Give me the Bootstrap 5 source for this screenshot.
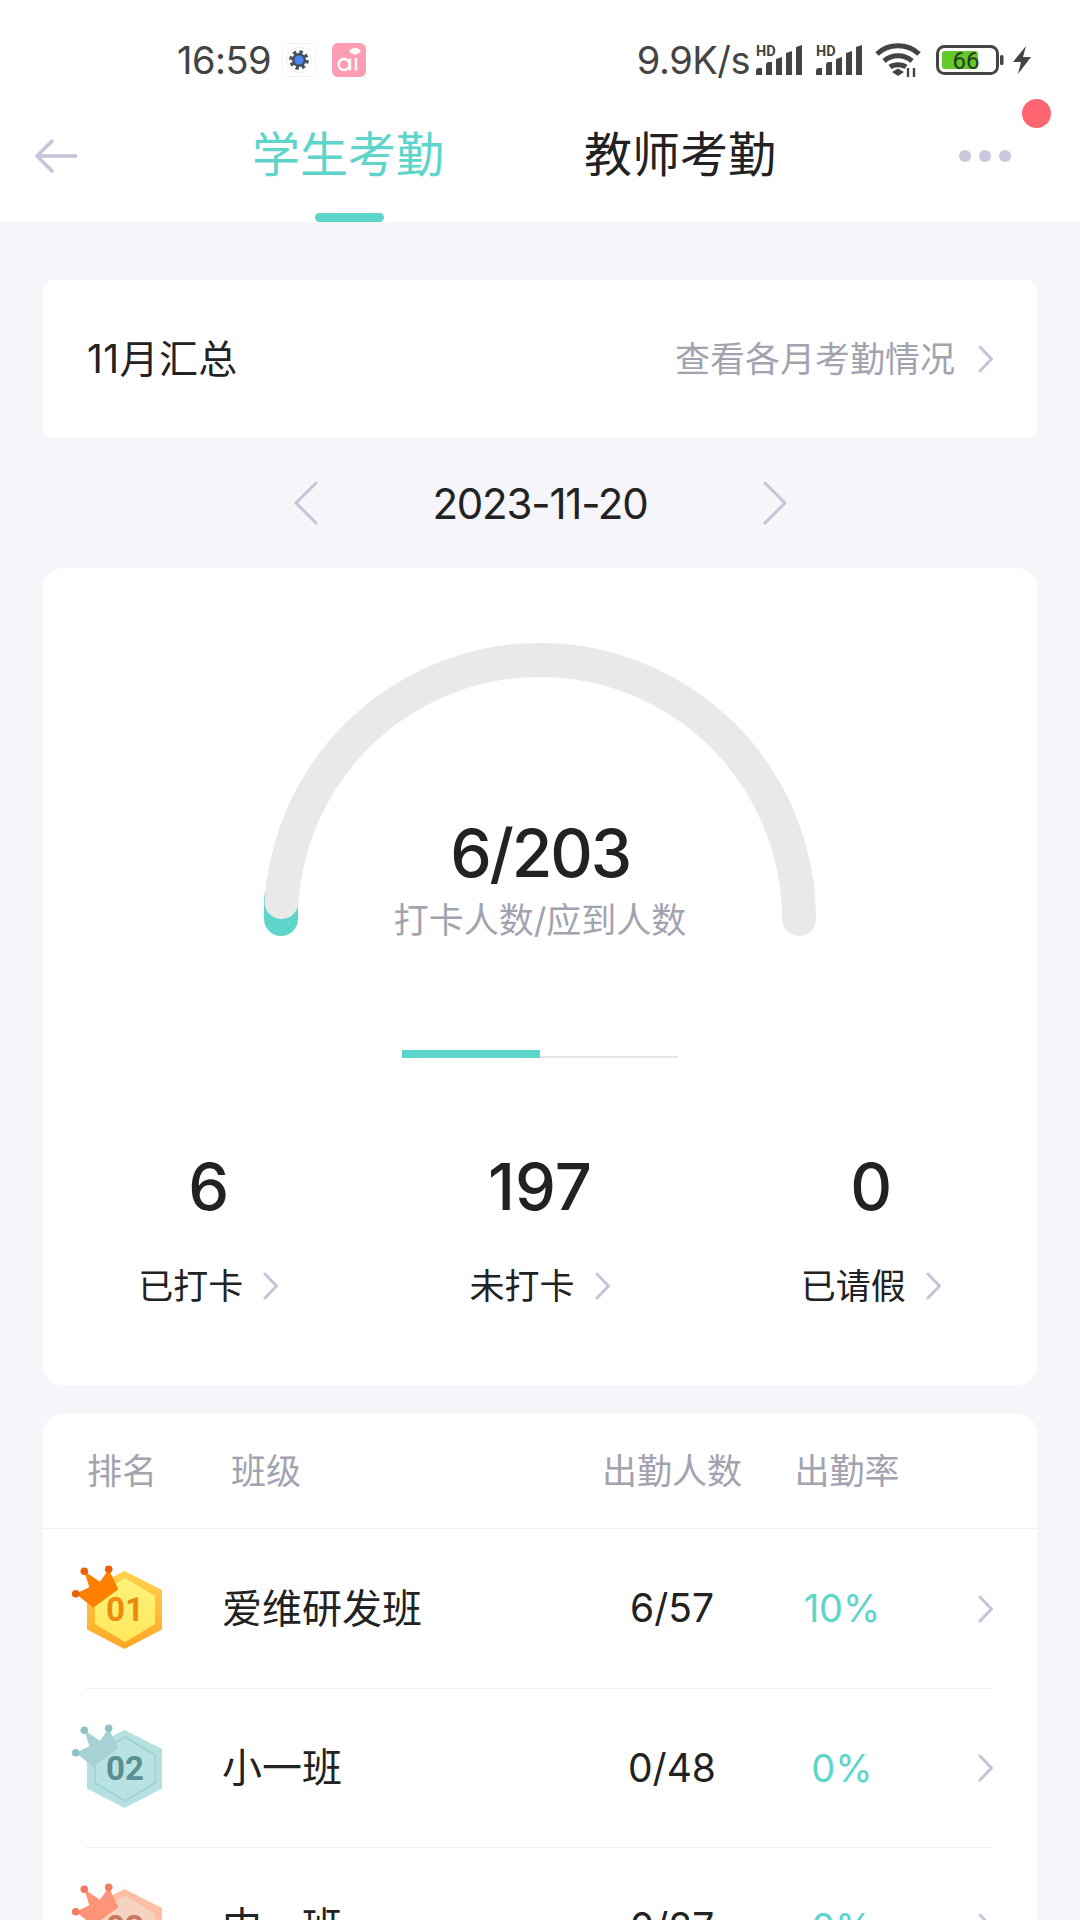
<!DOCTYPE html>
<html lang="zh-CN">
<head>
  <meta charset="UTF-8" />
  <meta name="viewport" content="width=device-width, initial-scale=1.0"/>
  <title>学生考勤</title>
  <link href="https://cdn.jsdelivr.net/npm/bootstrap@5.3.0/dist/css/bootstrap.min.css" rel="stylesheet" />
  <style>
    html, body {
      height: 1920px;
      overflow: hidden;
    }

    body {
      background: #f5f5fa;
      color: #222;
      font-family: Inter, "Noto Sans CJK SC", sans-serif;
      font-size: 35px;
    }

    svg {
      display: block;
      flex-shrink: 0;
    }

    .top-area {
      background: #fff;
      height: 222px;
      position: relative;
    }

    .status-row {
      color: #444;
      height: 84px;
      padding: 36px 48px 0 177px;
    }

    .status-time {
      font-size: 38px;
      letter-spacing: -.5px;
      width: 105px;
    }

    .status-speed {
      font-size: 38px;
      letter-spacing: -.5px;
      margin-right: 5px;
    }

    .gap-wide {
      margin-left: 15px;
    }

    .gap-mid {
      margin-left: 10px;
    }

    .title-row {
      height: 138px;
      padding: 6px 0 0 35px;
    }

    .tab-item {
      font-size: 48px;
      line-height: 1;
      position: absolute;
      top: 131px;
    }

    .tab-on {
      color: #5dd5ca;
      left: 252px;
    }

    .tab-off {
      left: 584px;
    }

    .tab-line {
      background: #5dd5ca;
      border-radius: 5px;
      height: 9px;
      left: 315px;
      position: absolute;
      top: 213px;
      width: 69px;
    }

    .more-dots {
      left: 959px;
      position: absolute;
      top: 150px;
    }

    .red-dot {
      background: #ff6672;
      border-radius: 50%;
      height: 29px;
      left: 1022px;
      position: absolute;
      top: 99px;
      width: 29px;
    }

    .page-body {
      padding: 58px 43px 0;
    }

    .panel {
      border: 0;
      border-radius: 20px;
    }

    .month-panel {
      border-radius: 10px;
      height: 158px;
      padding: 0 44px;
    }

    .month-name {
      font-size: 39px;
      letter-spacing: .4px;
    }

    .gray-text {
      color: #a3a3b0;
      gap: 22px;
    }

    .date-row {
      font-size: 42px;
      height: 130px;
      letter-spacing: -1.2px;
    }

    .date-text {
      text-align: center;
      width: 445px;
    }

    .gauge-panel {
      height: 817px;
      padding-top: 75px;
    }

    .gauge-wrap {
      height: 293px;
      position: relative;
      width: 552px;
    }

    .gauge-text {
      left: 0;
      position: absolute;
      right: 0;
      text-align: center;
      top: 167px;
    }

    .gauge-num {
      font-size: 66px;
      font-weight: 500;
      letter-spacing: -2.2px;
      line-height: 86px;
    }

    .gauge-sub {
      color: #a3a3b0;
      line-height: 44px;
      margin-top: 2px;
    }

    .mini-track {
      align-items: flex-end;
      display: flex;
      height: 8px;
      margin-top: 114px;
      width: 276px;
    }

    .mini-fill {
      background: #5dd5ca;
      height: 8px;
      width: 138px;
    }

    .mini-rest {
      background: #e4e4e4;
      flex: 1;
      height: 2px;
    }

    .stat-num {
      font-size: 65px;
      font-weight: 500;
      line-height: 80px;
      margin-top: 89px;
    }

    .stat-label {
      gap: 18px;
      line-height: 46px;
      margin-top: 36px;
    }

    .rank-panel {
      margin-top: 29px;
      padding-bottom: 40px;
    }

    .rank-head {
      border-bottom: 1px solid #f0f0f3;
      color: #a3a3b0;
      height: 115px;
      padding-left: 44px;
    }

    .c-rank {
      width: 144px;
    }

    .c-name {
      width: 356px;
    }

    .c-count {
      text-align: center;
      width: 170px;
    }

    .c-rate {
      text-align: center;
      width: 180px;
    }

    .rank-row {
      font-size: 39px;
      height: 159px;
      margin: 0 44px 0 43px;
    }

    .rank-row + .rank-row {
      border-top: 1px solid #f0f0f3;
    }

    .badge-cell {
      flex-shrink: 0;
      margin-left: -16px;
      width: 152px;
    }

    .row-name {
      font-size: 40px;
      width: 375px;
    }

    .row-count {
      text-align: center;
      width: 150px;
    }

    .row-rate {
      color: #5dd5ca;
      font-size: 38px;
      text-align: center;
      width: 190px;
    }

    .row-arrow {
      margin-left: auto;
    }
  </style>
</head>
<body>

<svg width="0" height="0" class="position-absolute">
  <defs>
    <linearGradient id="goldEdge" x1="0" y1="0" x2="0" y2="1">
      <stop offset="0" stop-color="#ffd34d"/>
      <stop offset="1" stop-color="#ffa726"/>
    </linearGradient>
    <linearGradient id="goldFace" x1="0" y1="0" x2="0" y2="1">
      <stop offset="0" stop-color="#fff27a"/>
      <stop offset="1" stop-color="#ffe95c"/>
    </linearGradient>
  </defs>
  <symbol id="chev" viewBox="0 0 16 28">
    <path d="M3 2l11.500 12L3 26" fill="none" stroke="#c5c4d8" stroke-width="3" stroke-linecap="round" stroke-linejoin="round"/>
  </symbol>
  <symbol id="bars" viewBox="0 0 50 30">
    <text x="1" y="11" font-family="Roboto, sans-serif" font-size="14.500" font-weight="700" fill="#444">HD</text>
    <path d="M1 30v-4q0-3 3-3h3v7zM11 30v-10q0-3 3-3h3v13zM21 30v-16l6-2v18zM31 30v-22l6-2v24zM41 30v-28l6-2v30z" fill="#444"/>
  </symbol>
</svg>

<div class="top-area">
  <div class="status-row d-flex align-items-center">
    <span class="status-time">16:59</span>
    <svg width="34" height="34" viewBox="0 0 34 34">
      <rect x=".5" y=".5" width="33" height="33" rx="5" fill="#fff" stroke="#f2f2f2"/>
      <circle cx="17" cy="17" r="12.500" fill="none" stroke="#eee" stroke-width="1"/>
      <circle cx="17" cy="17" r="8" fill="none" stroke="#46505e" stroke-width="3.600" stroke-dasharray="3.300 3"/>
      <circle cx="17" cy="17" r="7" fill="#46505e"/>
      <circle cx="17" cy="17" r="4.500" fill="#4a86ee"/>
    </svg>
    <svg class="ms-3" width="34" height="34" viewBox="0 0 34 34">
      <rect width="34" height="34" rx="6" fill="#ff9db5"/>
      <ellipse cx="23" cy="8" rx="5.500" ry="3" fill="#fff"/>
      <path d="M23 9v3" stroke="#fff" stroke-width="2"/>
      <circle cx="12" cy="21.500" r="5.500" fill="none" stroke="#fff" stroke-width="2.400"/>
      <path d="M18 15.500v12M24 15v12.500" stroke="#fff" stroke-width="2.400"/>
    </svg>
    <span class="status-speed ms-auto">9.9K/s</span>
    <svg width="50" height="30"><use href="#bars"/></svg>
    <svg class="gap-mid" width="50" height="30"><use href="#bars"/></svg>
    <svg class="gap-mid" width="46" height="34" viewBox="0 0 46 34">
      <path d="M2 11C13 0 33 0 44 11M9 18c8-7 20-7 28 0M15 24c4-3 12-3 16 0" fill="none" stroke="#444" stroke-width="5"/>
      <path d="M17 29l6-3.500 6 3.500-6 4z" fill="#444"/>
      <path d="M33 25v9M39 25v9" stroke="#444" stroke-width="2.400"/>
    </svg>
    <svg class="gap-wide" width="68" height="30" viewBox="0 0 68 30">
      <rect x="1.500" y="1.500" width="60" height="27" rx="7" fill="#fff" stroke="#444" stroke-width="3"/>
      <rect x="6" y="6" width="36" height="18" rx="3" fill="#63c92b"/>
      <rect x="64" y="10" width="3.500" height="10" rx="1.500" fill="#444"/>
      <text x="30" y="24" text-anchor="middle" font-family="Roboto, sans-serif" font-size="24" fill="#2c3a1f">66</text>
    </svg>
    <svg class="ms-2" width="20" height="30" viewBox="0 0 20 30">
      <path d="M14 1L1 17h8l-3 12 13-17h-8z" fill="#444"/>
    </svg>
  </div>
  <div class="title-row d-flex align-items-center">
    <svg width="42" height="34" viewBox="0 0 42 34">
      <path d="M41 17H3M17 2L2 17l15 15" fill="none" stroke="#c5c4d8" stroke-width="3.500" stroke-linecap="round" stroke-linejoin="round"/>
    </svg>
  </div>
  <span class="tab-item tab-on">学生考勤</span>
  <span class="tab-item tab-off">教师考勤</span>
  <div class="tab-line"></div>
  <svg class="more-dots" width="52" height="12" viewBox="0 0 52 12">
    <circle cx="6" cy="6" r="6" fill="#c9c8dc"/>
    <circle cx="26" cy="6" r="6" fill="#c9c8dc"/>
    <circle cx="46" cy="6" r="6" fill="#c9c8dc"/>
  </svg>
  <div class="red-dot"></div>
</div>

<div class="page-body">
  <div class="card panel month-panel flex-row align-items-center justify-content-between">
    <span class="month-name">11月汇总</span>
    <span class="d-flex align-items-center gray-text">查看各月考勤情况
      <svg width="16" height="28"><use href="#chev"/></svg>
    </span>
  </div>

  <div class="date-row d-flex align-items-center justify-content-center">
    <svg width="24" height="44" viewBox="0 0 24 44">
      <path d="M22 2L2 22l20 20" fill="none" stroke="#c5c4d8" stroke-width="3" stroke-linecap="round" stroke-linejoin="round"/>
    </svg>
    <span class="date-text">2023-11-20</span>
    <svg width="24" height="44" viewBox="0 0 24 44">
      <path d="M2 2l20 20L2 42" fill="none" stroke="#c5c4d8" stroke-width="3" stroke-linecap="round" stroke-linejoin="round"/>
    </svg>
  </div>

  <div class="card panel gauge-panel align-items-center">
    <div class="gauge-wrap">
      <svg width="552" height="293" viewBox="0 0 552 293">
        <path d="M17 276v-20" fill="none" stroke="#5dd5ca" stroke-width="34" stroke-linecap="round"/>
        <path d="M17.560 259A259 259 0 0 1 276 17A259 259 0 0 1 535 276" fill="none" stroke="#e9e9e9" stroke-width="34" stroke-linecap="round"/>
      </svg>
      <div class="gauge-text">
        <div class="gauge-num">6/203</div>
        <div class="gauge-sub">打卡人数/应到人数</div>
      </div>
    </div>
    <div class="mini-track">
      <div class="mini-fill"></div>
      <div class="mini-rest"></div>
    </div>
    <div class="row g-0 w-100 text-center">
      <div class="col-4">
        <div class="stat-num">6</div>
        <div class="stat-label d-flex align-items-center justify-content-center">已打卡<svg width="18" height="28"><use href="#chev"/></svg></div>
      </div>
      <div class="col-4">
        <div class="stat-num">197</div>
        <div class="stat-label d-flex align-items-center justify-content-center">未打卡<svg width="18" height="28"><use href="#chev"/></svg></div>
      </div>
      <div class="col-4">
        <div class="stat-num">0</div>
        <div class="stat-label d-flex align-items-center justify-content-center">已请假<svg width="18" height="28"><use href="#chev"/></svg></div>
      </div>
    </div>
  </div>

  <div class="card panel rank-panel">
    <div class="rank-head d-flex align-items-center">
      <span class="c-rank">排名</span>
      <span class="c-name">班级</span>
      <span class="c-count">出勤人数</span>
      <span class="c-rate">出勤率</span>
    </div>

    <div class="rank-row d-flex align-items-center">
      <div class="badge-cell">
        <svg width="95" height="90" viewBox="0 0 95 90">
          <path d="M54.500 7L92 26v39.500L54.500 85 17 65.500V26z" fill="url(#goldEdge)"/>
          <path d="M55 14l30 18v28L55 78 25 60V32z" fill="url(#goldFace)"/>
          <text x="55" y="57" text-anchor="middle" font-family="Roboto, sans-serif" font-size="33" font-weight="700" fill="#f08a0c">01</text>
          <path d="M14.300 7.300L30 17.700 38.700 5.300 48.300 25.300 23.300 43.700 5.700 29.700 19.300 23.300z" fill="#ff7f00"/>
          <circle cx="14.300" cy="7.300" r="3.800" fill="#e8610a"/>
          <circle cx="38.700" cy="5.300" r="3.800" fill="#e8610a"/>
          <circle cx="5.700" cy="29.700" r="3.800" fill="#e8610a"/>
        </svg>
      </div>
      <span class="row-name">爱维研发班</span>
      <span class="row-count">6/57</span>
      <span class="row-rate">10%</span>
      <svg class="row-arrow" width="16" height="28"><use href="#chev"/></svg>
    </div>

    <div class="rank-row d-flex align-items-center">
      <div class="badge-cell">
        <svg width="95" height="90" viewBox="0 0 95 90">
          <path d="M54.500 7L92 26v39.500L54.500 85 17 65.500V26z" fill="#b4e0e0"/>
          <path d="M55 14l30 18v28L55 78 25 60V32z" fill="#b8e3e2" stroke="#9fd0d1" stroke-width="1.500"/>
          <text x="55" y="57" text-anchor="middle" font-family="Roboto, sans-serif" font-size="33" font-weight="700" fill="#5c8f91">02</text>
          <path d="M14.300 7.300L30 17.700 38.700 5.300 48.300 25.300 23.300 43.700 5.700 29.700 19.300 23.300z" fill="#a6d1d5"/>
          <circle cx="14.300" cy="7.300" r="3.800" fill="#8ec3c6"/>
          <circle cx="38.700" cy="5.300" r="3.800" fill="#8ec3c6"/>
          <circle cx="5.700" cy="29.700" r="3.800" fill="#8ec3c6"/>
        </svg>
      </div>
      <span class="row-name">小一班</span>
      <span class="row-count">0/48</span>
      <span class="row-rate">0%</span>
      <svg class="row-arrow" width="16" height="28"><use href="#chev"/></svg>
    </div>

    <div class="rank-row d-flex align-items-center">
      <div class="badge-cell">
        <svg width="95" height="90" viewBox="0 0 95 90">
          <path d="M54.500 7L92 26v39.500L54.500 85 17 65.500V26z" fill="#ffbfa6"/>
          <path d="M55 14l30 18v28L55 78 25 60V32z" fill="#f6d2c0"/>
          <text x="55" y="57" text-anchor="middle" font-family="Roboto, sans-serif" font-size="33" font-weight="700" fill="#c8775c">03</text>
          <path d="M14.300 7.300L30 17.700 38.700 5.300 48.300 25.300 23.300 43.700 5.700 29.700 19.300 23.300z" fill="#ff9478"/>
          <circle cx="14.300" cy="7.300" r="3.800" fill="#f37b5f"/>
          <circle cx="38.700" cy="5.300" r="3.800" fill="#f37b5f"/>
          <circle cx="5.700" cy="29.700" r="3.800" fill="#f37b5f"/>
        </svg>
      </div>
      <span class="row-name">中一班</span>
      <span class="row-count">0/27</span>
      <span class="row-rate">0%</span>
      <svg class="row-arrow" width="16" height="28"><use href="#chev"/></svg>
    </div>
  </div>
</div>

<script src="https://cdn.jsdelivr.net/npm/bootstrap@5.3.0/dist/js/bootstrap.bundle.min.js"></script>
</body>
</html>
